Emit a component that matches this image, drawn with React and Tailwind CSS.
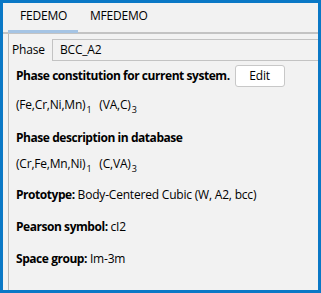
import React from 'react'

function Sub({ children }) {
  return <span className="relative top-[4px] text-[9px] ml-[1px]">{children}</span>
}

export default function App() {
  return (
    <div className="w-[321px] h-[293px] border-[3px] border-[#0a78c6] bg-[#f2f2f2] flex flex-col text-[12px] tracking-[-0.2px] text-black font-['Open_Sans',sans-serif] overflow-hidden">
      <div className="flex h-[31px] shrink-0 border-b-2 border-[#c3c3c3] pl-[5px]">
        <div className="relative z-10 h-[30px] w-[70px] border-b-[3px] border-[#a5c4e4] pl-[12px] pt-[5px] leading-[16px]">FEDEMO</div>
        <div className="h-[29px] pl-[12px] pt-[5px] leading-[16px]">MFEDEMO</div>
      </div>

      <div className="flex-1 ml-[5px] border-l border-[#b8b8b8] flex flex-col">
        <div className="flex items-center h-[22px] mt-[5px]">
          <div className="w-[43px] pl-[3px] leading-[16px]">Phase</div>
          <div className="flex-1 h-[22px] border border-r-0 border-[#c3c3c3] pl-[7px] leading-[20px]">BCC_A2</div>
        </div>

        <div className="pl-[7px]">
          <div className="flex items-center h-[22px] mt-[4px]">
            <div className="font-bold tracking-[-0.45px] leading-[16px]">Phase constitution for current system.</div>
            <button className="ml-[5px] w-[50px] h-[22px] bg-white border border-[#c8c8c8] rounded-[3px] leading-[20px]">Edit</button>
          </div>

          <div className="mt-[10px] leading-[16px] h-[16px]">
            (Fe,Cr,Ni,Mn)<Sub>1</Sub><span className="ml-[8px]">(VA,C)</span><Sub>3</Sub>
          </div>

          <div className="mt-[17px] font-bold tracking-[-0.45px] leading-[16px]">Phase description in database</div>

          <div className="mt-[10px] leading-[16px] h-[16px]">
            (Cr,Fe,Mn,Ni)<Sub>1</Sub><span className="ml-[8px]">(C,VA)</span><Sub>3</Sub>
          </div>

          <div className="mt-[15px] leading-[16px]">
            <span className="font-bold tracking-[-0.45px]">Prototype:</span> Body-Centered Cubic (W, A2, bcc)
          </div>

          <div className="mt-[16px] leading-[16px]">
            <span className="font-bold tracking-[-0.45px]">Pearson symbol:</span> cI2
          </div>

          <div className="mt-[16px] leading-[16px]">
            <span className="font-bold tracking-[-0.45px]">Space group:</span> Im-3m
          </div>
        </div>
      </div>
    </div>
  )
}
